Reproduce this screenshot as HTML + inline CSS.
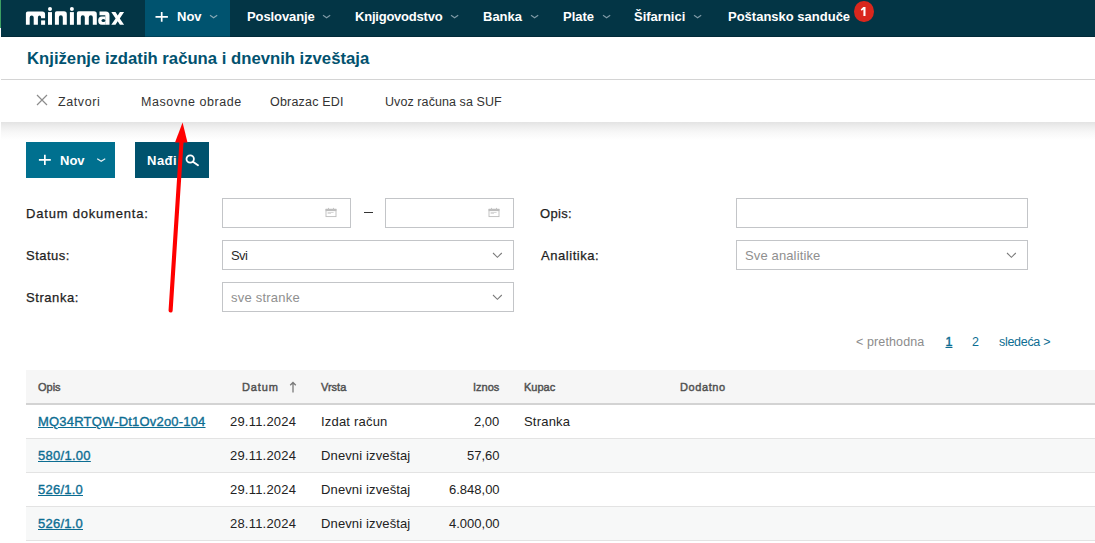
<!DOCTYPE html>
<html><head><meta charset="utf-8">
<style>
*{box-sizing:border-box;margin:0;padding:0}
html,body{width:1095px;height:543px;overflow:hidden;background:#fff}
body{position:relative;font-family:"Liberation Sans",sans-serif;color:#222}
.a{position:absolute;white-space:nowrap;line-height:1}
.hdr{position:absolute;left:1px;top:0;width:1094px;height:37px;background:#033545}
.w{color:#fff;font-weight:bold;font-size:13px}
.chev{position:absolute}
.tb{font-size:12.5px;color:#333}
.lbl{font-size:13px;color:#1e1e1e;-webkit-text-stroke:0.25px #1e1e1e}
.box{position:absolute;border:1px solid #c3c5c8;background:#fff}
.th{font-size:11px;color:#505050;-webkit-text-stroke:0.42px #505050}
.td{font-size:13px;color:#222}
.lnk{font-size:13px;color:#0c6d92;-webkit-text-stroke:0.36px #0c6d92;text-decoration:underline;text-decoration-thickness:1px;text-underline-offset:1px}
</style></head><body>
<!-- header -->
<div class="hdr"></div>
<div style="position:absolute;left:0;top:0;width:1px;height:28px;background:#3c9e62"></div>
<div style="position:absolute;left:0;top:28px;width:1px;height:9px;background:#fff"></div>
<svg style="position:absolute;left:0;top:0" width="140" height="36" viewBox="0 0 140 36" fill="#fff">
<path d="M25.9 24.8 V13.2 Q25.9 11.4 27.7 11.4 H42.3 Q45.1 11.4 45.1 14.2 V18.2 H41.1 V17.4 Q41.1 15.4 39.5 15.4 Q37.9 15.4 37.9 17.4 V24.8 H33.7 V17.4 Q33.7 15.4 31.7 15.4 Q29.7 15.4 29.7 17.4 V24.8 Z"/>
<rect x="41.1" y="20.4" width="4" height="4.4"/>
<circle cx="50" cy="9.1" r="2"/><rect x="48" y="12.1" width="4" height="12.7"/>
<path d="M54.9 24.8 V13.1 Q54.9 11.3 56.7 11.3 H64 Q66.8 11.3 66.8 14.1 V24.8 H62.8 V17.3 Q62.8 15.3 60.85 15.3 Q58.9 15.3 58.9 17.3 V24.8 Z"/>
<circle cx="71.9" cy="9.1" r="2"/><rect x="69.9" y="12.1" width="4" height="12.7"/>
<path d="M76.9 24.8 V13.1 Q76.9 11.3 78.7 11.3 H94 Q96.8 11.3 96.8 14.1 V24.8 H92.8 V17.3 Q92.8 15.3 90.8 15.3 Q88.8 15.3 88.8 17.3 V24.8 H84.8 V17.3 Q84.8 15.3 82.8 15.3 Q80.8 15.3 80.8 17.3 V24.8 Z"/>
<path d="M99.5 11.6 H105.8 Q109.5 11.6 109.5 15.3 V24.8 H105.3 V15.2 H99.5 Z"/>
<path d="M105.4 16.6 H101.8 Q98.2 16.6 98.2 20.7 Q98.2 24.8 101.8 24.8 H105.4 Z"/>
<ellipse cx="103.4" cy="20.4" rx="1.9" ry="1.5" fill="#033545"/>
<path d="M111.3 12 H115.5 L117.7 15.6 L119.9 12 H124.1 L119.8 18.4 L124.1 24.8 H119.9 L117.7 21.2 L115.5 24.8 H111.3 L115.6 18.4 Z"/>
</svg>
<div style="position:absolute;left:145px;top:0;width:85px;height:37px;background:#00536f"></div>
<div style="position:absolute;left:1px;top:36px;width:1094px;height:1px;background:rgba(0,10,20,0.25)"></div>
<!-- plus -->
<svg style="position:absolute;left:150px;top:8px" width="24" height="20" viewBox="0 0 24 20"><path d="M5.5 8.9 H17.9 M11.7 4 V13.8" stroke="#fff" stroke-width="1.7"/></svg>
<div class="a w" style="left:177px;top:10px">Nov</div>
<svg class="chev" style="left:209px;top:14px" width="10" height="5" viewBox="0 0 10 5"><path d="M1 1.2 L4.6 3.8 L8.2 1.2" fill="none" stroke="#86a9b6" stroke-width="1.1"/></svg>

<div class="a w" style="left:247px;top:10px;letter-spacing:-0.1px">Poslovanje</div>
<svg class="chev" style="left:322px;top:14px" width="10" height="5" viewBox="0 0 10 5"><path d="M1 1.2 L4.6 3.8 L8.2 1.2" fill="none" stroke="#7f9aa6" stroke-width="1.1"/></svg>
<div class="a w" style="left:355px;top:10px;letter-spacing:-0.22px">Knjigovodstvo</div>
<svg class="chev" style="left:450px;top:14px" width="10" height="5" viewBox="0 0 10 5"><path d="M1 1.2 L4.6 3.8 L8.2 1.2" fill="none" stroke="#7f9aa6" stroke-width="1.1"/></svg>
<div class="a w" style="left:483px;top:10px">Banka</div>
<svg class="chev" style="left:530px;top:14px" width="10" height="5" viewBox="0 0 10 5"><path d="M1 1.2 L4.6 3.8 L8.2 1.2" fill="none" stroke="#7f9aa6" stroke-width="1.1"/></svg>
<div class="a w" style="left:563px;top:10px">Plate</div>
<svg class="chev" style="left:602px;top:14px" width="10" height="5" viewBox="0 0 10 5"><path d="M1 1.2 L4.6 3.8 L8.2 1.2" fill="none" stroke="#7f9aa6" stroke-width="1.1"/></svg>
<div class="a w" style="left:634px;top:10px">Šifarnici</div>
<svg class="chev" style="left:693px;top:14px" width="10" height="5" viewBox="0 0 10 5"><path d="M1 1.2 L4.6 3.8 L8.2 1.2" fill="none" stroke="#7f9aa6" stroke-width="1.1"/></svg>
<div class="a w" style="left:728px;top:10px">Poštansko sanduče</div>
<div style="position:absolute;left:854px;top:0.5px;width:19.5px;height:21.2px;border-radius:50%;background:#d9271d"></div>
<svg style="position:absolute;left:858px;top:5px" width="10" height="13" viewBox="0 0 10 13"><path d="M5.3 1.9 H7.5 V11 H5.4 V4.5 L3.6 5.8 L2.7 4.4 Z" fill="#fff"/></svg>

<!-- title -->
<div class="a" style="left:27px;top:51px;font-size:16.7px;font-weight:bold;color:#02526f">Knjiženje izdatih računa i dnevnih izveštaja</div>
<div style="position:absolute;left:1px;top:79px;width:1094px;height:1px;background:#d4d4d4"></div>

<!-- toolbar -->
<div style="position:absolute;left:1px;top:80px;width:1094px;height:42px;background:#fff"></div>
<div style="position:absolute;left:1px;top:122px;width:1094px;height:18px;background:linear-gradient(#e3e3e3 0%,#efefef 30%,#f8f8f8 60%,#fff 100%)"></div>
<svg style="position:absolute;left:36px;top:94px" width="12" height="12" viewBox="0 0 12 12"><path d="M1 1 L11 11 M11 1 L1 11" stroke="#8c8c8c" stroke-width="1.2"/></svg>
<div class="a tb" style="left:58px;top:96px;letter-spacing:0.6px">Zatvori</div>
<div class="a tb" style="left:141px;top:96px;letter-spacing:0.55px">Masovne obrade</div>
<div class="a tb" style="left:270px;top:96px;letter-spacing:0.2px">Obrazac EDI</div>
<div class="a tb" style="left:385px;top:96px;letter-spacing:0.08px">Uvoz računa sa SUF</div>

<!-- buttons -->
<div style="position:absolute;left:26px;top:142px;width:89px;height:36px;background:#00708f"></div>
<svg style="position:absolute;left:34px;top:150px" width="24" height="20" viewBox="0 0 24 20"><path d="M4.9 9.9 H16.8 M10.85 4.8 V14.9" stroke="#fff" stroke-width="1.7"/></svg>
<div class="a w" style="left:60px;top:154px">Nov</div>
<svg class="chev" style="left:96px;top:157px" width="11" height="6" viewBox="0 0 11 6"><path d="M1.6 2 L5.2 4.3 L8.8 2" fill="none" stroke="#e8f1f4" stroke-width="1.25" stroke-linecap="round"/></svg>
<div style="position:absolute;left:135px;top:142px;width:74px;height:36px;background:#00526d"></div>
<div class="a w" style="left:147px;top:154px;letter-spacing:0.5px">Nađi</div>
<svg style="position:absolute;left:184px;top:154px" width="17" height="13" viewBox="0 0 17 13"><circle cx="6.2" cy="5" r="3.7" fill="none" stroke="#fff" stroke-width="1.8"/><path d="M8.9 7.7 L14 11.3" stroke="#fff" stroke-width="1.9" stroke-linecap="round"/></svg>

<!-- form -->
<div class="a lbl" style="left:26px;top:207px;letter-spacing:0.8px">Datum dokumenta:</div>
<div class="a lbl" style="left:26px;top:249px;letter-spacing:0.5px">Status:</div>
<div class="a lbl" style="left:26px;top:291px;letter-spacing:0.57px">Stranka:</div>
<div class="a lbl" style="left:540px;top:207px;letter-spacing:0.3px">Opis:</div>
<div class="a lbl" style="left:541px;top:249px;letter-spacing:0.55px">Analitika:</div>

<div class="box" style="left:222px;top:198px;width:129px;height:30px"></div>
<svg style="position:absolute;left:325px;top:207px" width="12" height="11" viewBox="0 0 12 11"><rect x="1" y="2.3" width="10" height="7.3" fill="none" stroke="#bdbdbd" stroke-width="0.9"/><rect x="0.6" y="1.9" width="10.8" height="2.2" fill="#bdbdbd"/><rect x="3" y="0.9" width="1" height="1.4" fill="#c5c5c5"/><rect x="8" y="0.9" width="1" height="1.4" fill="#c5c5c5"/><rect x="2.6" y="5.1" width="6" height="0.8" fill="#cfcfcf"/><rect x="2.6" y="6.2" width="3.4" height="0.8" fill="#d5d5d5"/></svg>
<div style="position:absolute;left:364px;top:212px;width:9px;height:1px;background:#333"></div>
<div class="box" style="left:385px;top:198px;width:129px;height:30px"></div>
<svg style="position:absolute;left:488px;top:207px" width="12" height="11" viewBox="0 0 12 11"><rect x="1" y="2.3" width="10" height="7.3" fill="none" stroke="#bdbdbd" stroke-width="0.9"/><rect x="0.6" y="1.9" width="10.8" height="2.2" fill="#bdbdbd"/><rect x="3" y="0.9" width="1" height="1.4" fill="#c5c5c5"/><rect x="8" y="0.9" width="1" height="1.4" fill="#c5c5c5"/><rect x="2.6" y="5.1" width="6" height="0.8" fill="#cfcfcf"/><rect x="2.6" y="6.2" width="3.4" height="0.8" fill="#d5d5d5"/></svg>

<div class="box" style="left:222px;top:240px;width:292px;height:30px"></div>
<div class="a td" style="left:231px;top:249px;letter-spacing:-0.6px;color:#2a2a2a">Svi</div>
<svg class="chev" style="left:492px;top:252px" width="11" height="7" viewBox="0 0 11 7"><path d="M1 1 L5.4 5.3 L9.8 1" fill="none" stroke="#7a7a7a" stroke-width="1.05"/></svg>
<div class="box" style="left:222px;top:282px;width:292px;height:30px"></div>
<div class="a td" style="left:231px;top:291px;color:#8f8f8f;letter-spacing:0.22px">sve stranke</div>
<svg class="chev" style="left:492px;top:294px" width="11" height="7" viewBox="0 0 11 7"><path d="M1 1 L5.4 5.3 L9.8 1" fill="none" stroke="#7a7a7a" stroke-width="1.05"/></svg>

<div class="box" style="left:736px;top:198px;width:292px;height:30px"></div>
<div class="box" style="left:736px;top:240px;width:292px;height:30px"></div>
<div class="a td" style="left:745px;top:249px;color:#8f8f8f;letter-spacing:0.13px">Sve analitike</div>
<svg class="chev" style="left:1006px;top:252px" width="11" height="7" viewBox="0 0 11 7"><path d="M1 1 L5.4 5.3 L9.8 1" fill="none" stroke="#7a7a7a" stroke-width="1.05"/></svg>

<!-- pagination -->
<div class="a" style="left:856px;top:336px;font-size:12.5px;color:#8c8c8c;letter-spacing:0.12px">&lt; prethodna</div>
<div class="a" style="left:945px;top:336px;font-size:12.5px;color:#0c6d92;-webkit-text-stroke:0.45px #0c6d92;text-decoration:underline;text-decoration-thickness:1px;text-underline-offset:1px;padding:0 0.5px">1</div>
<div class="a" style="left:972px;top:336px;font-size:12.5px;color:#0c6d92">2</div>
<div class="a" style="left:999px;top:336px;font-size:12.5px;color:#0c6d92;letter-spacing:-0.3px">sledeća &gt;</div>

<!-- table -->
<div style="position:absolute;left:26px;top:370px;width:1069px;height:33px;background:#f6f6f6"></div>
<div style="position:absolute;left:26px;top:403px;width:1069px;height:2px;background:#d3d3d3"></div>
<div style="position:absolute;left:26px;top:405px;width:1069px;height:33px;background:#fff"></div>
<div style="position:absolute;left:26px;top:438px;width:1069px;height:1px;background:#e3e3e3"></div>
<div style="position:absolute;left:26px;top:439px;width:1069px;height:33px;background:#f7f8f8"></div>
<div style="position:absolute;left:26px;top:472px;width:1069px;height:1px;background:#e3e3e3"></div>
<div style="position:absolute;left:26px;top:506px;width:1069px;height:1px;background:#e3e3e3"></div>
<div style="position:absolute;left:26px;top:507px;width:1069px;height:33px;background:#f7f8f8"></div>
<div style="position:absolute;left:26px;top:540px;width:1069px;height:1px;background:#e3e3e3"></div>

<div class="a th" style="left:38px;top:382px">Opis</div>
<div class="a th" style="left:242px;top:382px;letter-spacing:0.9px">Datum</div>
<svg style="position:absolute;left:289px;top:381px" width="8" height="12" viewBox="0 0 8 12"><path d="M4 1.5 V11.5 M1.2 4.3 L4 1.5 L6.8 4.3" fill="none" stroke="#7a7a7a" stroke-width="1.3"/></svg>
<div class="a th" style="left:321px;top:382px">Vrsta</div>
<div class="a th" style="left:473px;top:382px">Iznos</div>
<div class="a th" style="left:524px;top:382px">Kupac</div>
<div class="a th" style="left:680px;top:382px;letter-spacing:0.6px">Dodatno</div>

<div class="a lnk" style="left:38px;top:415px;letter-spacing:0.19px">MQ34RTQW-Dt1Ov2o0-104</div>
<div class="a td" style="left:230px;top:415px;letter-spacing:0.2px">29.11.2024</div>
<div class="a td" style="left:321px;top:415px;letter-spacing:0.2px">Izdat račun</div>
<div class="a td" style="left:474px;top:415px">2,00</div>
<div class="a td" style="left:524px;top:415px;letter-spacing:0.2px">Stranka</div>

<div class="a lnk" style="left:38px;top:449px;letter-spacing:0.28px">580/1.00</div>
<div class="a td" style="left:230px;top:449px;letter-spacing:0.2px">29.11.2024</div>
<div class="a td" style="left:321px;top:449px;letter-spacing:0.13px">Dnevni izveštaj</div>
<div class="a td" style="left:467px;top:449px">57,60</div>

<div class="a lnk" style="left:38px;top:483px;letter-spacing:0.23px">526/1.0</div>
<div class="a td" style="left:230px;top:483px;letter-spacing:0.2px">29.11.2024</div>
<div class="a td" style="left:321px;top:483px;letter-spacing:0.13px">Dnevni izveštaj</div>
<div class="a td" style="left:449px;top:483px">6.848,00</div>

<div class="a lnk" style="left:38px;top:517px;letter-spacing:0.23px">526/1.0</div>
<div class="a td" style="left:230px;top:517px;letter-spacing:0.2px">28.11.2024</div>
<div class="a td" style="left:321px;top:517px;letter-spacing:0.13px">Dnevni izveštaj</div>
<div class="a td" style="left:449px;top:517px">4.000,00</div>

<!-- red arrow annotation -->
<svg style="position:absolute;left:0;top:0" width="1095" height="543" viewBox="0 0 1095 543">
<path d="M181.6 140 L170.6 310.5" stroke="#ff0000" stroke-width="4.1" stroke-linecap="round"/>
<path d="M182.6 122.5 L175 142.5 L187.5 142.5 Z" fill="#ff0000"/>
</svg>
</body></html>
